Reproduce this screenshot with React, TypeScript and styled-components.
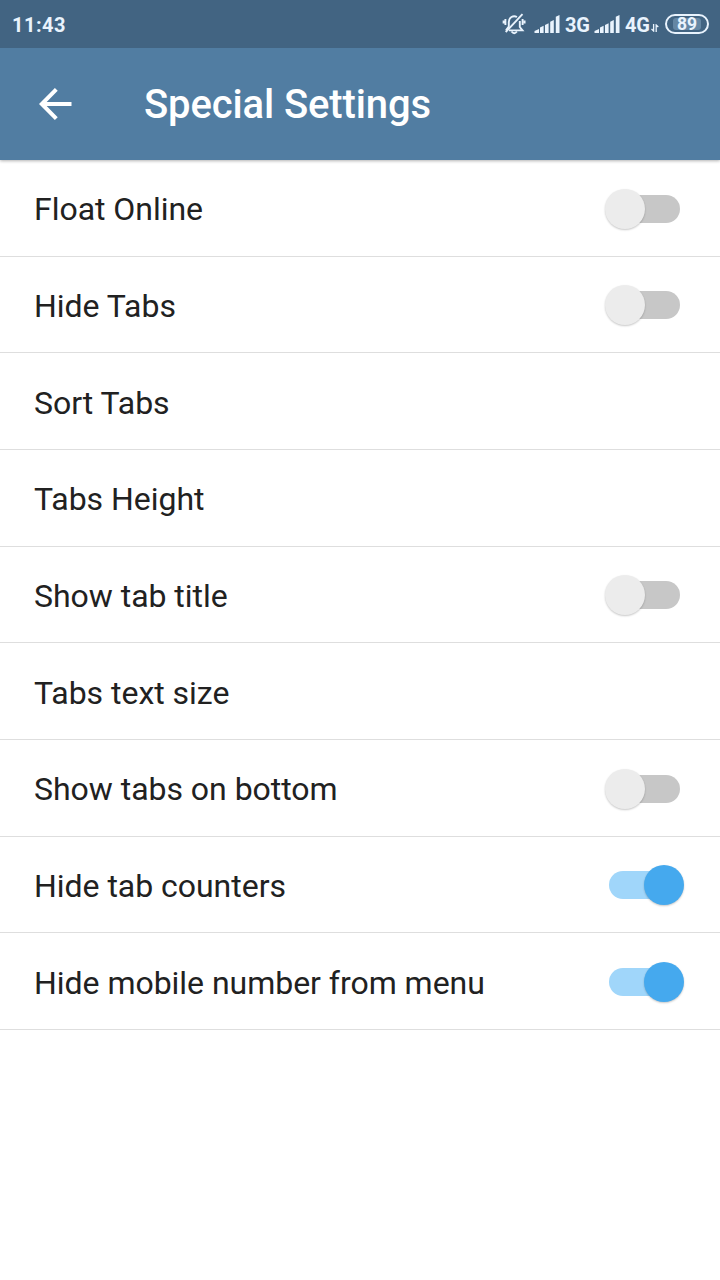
import React from 'react';
import styled, { createGlobalStyle } from 'styled-components';

const GlobalStyle = createGlobalStyle`
  * { box-sizing: border-box; }
  body { margin: 0; background: #fff; font-family: Roboto, sans-serif; }
`;

const Screen = styled.div`
  width: 720px;
  height: 1280px;
  display: flex;
  flex-direction: column;
  background: #fff;
  overflow: hidden;
`;

const StatusBar = styled.div`
  position: relative;
  z-index: 1;
  height: 48px;
  flex: none;
  display: flex;
  align-items: center;
  justify-content: space-between;
  padding: 0 11px 0 12px;
  background: #426482;
  color: #e9f3fd;
  font-size: 20px;
  font-weight: 700;
  line-height: 48px;
`;

const Clock = styled.span`
  letter-spacing: 0.5px;
  padding-top: 1px;
`;

const StatusIcons = styled.div`
  display: flex;
  align-items: center;
  height: 48px;
  svg { display: block; flex: none; }
`;

const Network = styled.span<{ $width: number }>`
  width: ${p => p.$width}px;
  padding: 1px 0 0 5px;
  white-space: nowrap;
  letter-spacing: -0.1px;
`;

const Battery = styled.div`
  width: 44px;
  height: 20px;
  margin-left: 6px;
  border: 2px solid #e9f3fd;
  border-radius: 10px;
  padding: 2px 6px;
  display: flex;
`;

const BatteryLevel = styled.div`
  flex: 1;
  display: flex;
  align-items: center;
  justify-content: center;
  border-radius: 3px;
  background: #6587a4;
  font-size: 17.5px;
  line-height: 12px;
`;

const Header = styled.header`
  height: 112px;
  flex: none;
  display: flex;
  align-items: center;
  padding-left: 39px;
  background: #517da2;
  color: #fff;
  box-shadow: 0 1px 3px rgba(0, 0, 0, 0.3);
`;

const BackButton = styled.button`
  width: 105px;
  padding: 0;
  border: 0;
  background: none;
  color: inherit;
  svg { display: block; }
`;

const Title = styled.h1`
  margin: 0;
  padding-top: 1px;
  font-size: 40px;
  font-weight: 500;
  line-height: 48px;
  letter-spacing: -0.12px;
`;

const List = styled.div`
  height: 870px;
  display: grid;
  grid-template-rows: repeat(9, 1fr);
`;

const Row = styled.div`
  display: flex;
  align-items: center;
  justify-content: space-between;
  padding: 2px 35px 0 34px;
  border-bottom: 1px solid #dedede;
  color: #212121;
  font-size: 32px;
`;

const Label = styled.span`
  padding-top: 1px;
  line-height: 40px;
  letter-spacing: -0.03px;
`;

const Track = styled.div<{ $on: boolean }>`
  width: 71px;
  height: 28px;
  margin-right: ${p => (p.$on ? 0 : 5)}px;
  display: flex;
  align-items: center;
  justify-content: ${p => (p.$on ? 'flex-end' : 'flex-start')};
  border-radius: 14px;
  background: ${p => (p.$on ? '#a0d6fa' : '#c7c7c7')};
`;

const SwitchSlot = styled.div<{ $on: boolean }>`
  width: 80px;
  display: flex;
  justify-content: ${p => (p.$on ? 'flex-start' : 'flex-end')};
  padding-left: 4px;
`;

const Thumb = styled.div<{ $on: boolean }>`
  flex: none;
  width: 40px;
  height: 40px;
  margin: 0 ${p => (p.$on ? -4 : 0)}px 0 ${p => (p.$on ? 0 : -4)}px;
  border-radius: 50%;
  background: ${p => (p.$on ? '#45a9ee' : '#ececec')};
  box-shadow: 0 1px 2px rgba(0, 0, 0, 0.22);
`;

const MutedBell = () => (
  <svg width="24" height="24" viewBox="0 0 24 24" fill="none" stroke="#e9f3fd" strokeWidth="1.9">
    <path d="M7 18.4h13.5L17.8 15V9M15 5C11 2.8 6.8 5.6 6.8 10v4.5L4 18.4" />
    <path d="M9.5 19.5q2.7 3.5 5.4 0M3.4 7v6M1.6 8.5v3M20.6 7v6M22.6 8.5v3" />
    <path d="M20.5 2.2 3.7 20" />
  </svg>
);

const Signal = () => (
  <svg width="26" height="20" viewBox="0 0 26 20" fill="#e9f3fd">
    <path d="M.5 19v-2L5 15v4zM6 19v-5.5l3.6-1.7V19zM11 19v-8l3.6-1.7V19zM16.2 19V7.7L19.8 6v13zM21.8 19V2.8L25.5 1v18z" />
  </svg>
);

const DataArrows = () => (
  <svg width="8" height="8" viewBox="0 0 8 8" fill="none" stroke="#e9f3fd" strokeWidth="1.3">
    <path d="M2.6 0v7L.5 5M5.2 8V1l2.1 2" />
  </svg>
);

const BackArrow = () => (
  <svg width="33" height="32" viewBox="0 0 33 32" fill="none" stroke="currentColor" strokeWidth="4">
    <path d="M32.5 16H3M17.3 1.4 2.8 16l14.5 14.6" />
  </svg>
);

const settings: { label: string; on?: boolean }[] = [
  { label: 'Float Online', on: false },
  { label: 'Hide Tabs', on: false },
  { label: 'Sort Tabs' },
  { label: 'Tabs Height' },
  { label: 'Show tab title', on: false },
  { label: 'Tabs text size' },
  { label: 'Show tabs on bottom', on: false },
  { label: 'Hide tab counters', on: true },
  { label: 'Hide mobile number from menu', on: true },
];

const Switch = ({ on }: { on: boolean }) => (
  <SwitchSlot $on={on} role="switch" aria-checked={on}>
    <Track $on={on}>
      <Thumb $on={on} />
    </Track>
  </SwitchSlot>
);

const BellSlot = styled.div`
  margin-right: 8px;
`;

const ArrowSlot = styled.div`
  padding-top: 8px;
`;

export default function App() {
  return (
    <Screen>
      <GlobalStyle />
      <StatusBar>
        <Clock>11:43</Clock>
        <StatusIcons>
          <BellSlot><MutedBell /></BellSlot>
          <Signal />
          <Network $width={34}>3G</Network>
          <Signal />
          <Network $width={31}>4G</Network>
          <ArrowSlot><DataArrows /></ArrowSlot>
          <Battery><BatteryLevel>89</BatteryLevel></Battery>
        </StatusIcons>
      </StatusBar>
      <Header>
        <BackButton aria-label="Back"><BackArrow /></BackButton>
        <Title>Special Settings</Title>
      </Header>
      <List>
        {settings.map(s => (
          <Row key={s.label}>
            <Label>{s.label}</Label>
            {s.on !== undefined && <Switch on={s.on} />}
          </Row>
        ))}
      </List>
    </Screen>
  );
}
